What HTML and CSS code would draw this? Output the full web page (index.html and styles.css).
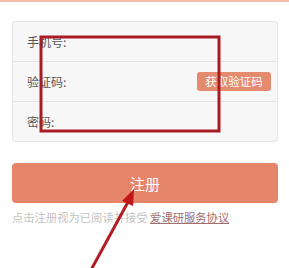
FILE: index.html
```html
<!DOCTYPE html>
<html lang="zh">
<head>
<meta charset="utf-8">
<link rel="stylesheet" href="styles.css">
</head>
<body>
<div class="topline"></div>
<div class="page">
  <div class="card">
    <div class="row"><span class="label">手机号:</span></div>
    <div class="row"><span class="label">验证码:</span><button class="code-btn">获取验证码</button></div>
    <div class="row"><span class="label">密码:</span></div>
  </div>
  <button class="submit">注册</button>
  <p class="terms">点击注册视为已阅读并接受 <a class="link">爱课研服务协议</a></p>
</div>
<svg class="annot" width="289" height="268" viewBox="0 0 289 268">
  <rect x="41" y="37" width="178" height="94" fill="none" stroke="#a81d22" stroke-width="3"/>
  <line x1="91" y1="270" x2="128" y2="202" stroke="#b01e24" stroke-width="3"/>
  <polygon points="134,189 122,201 133,206" fill="#c0161c"/>
</svg>
</body>
</html>
```
FILE: styles.css
```css
* { box-sizing: border-box; }
html, body { margin: 0; padding: 0; background: #fff; }
body {
  width: 289px;
  height: 268px;
  overflow: hidden;
  position: relative;
  font-family: "Noto Sans CJK SC", "Noto Sans", sans-serif;
}
.topline { height: 2px; background: #f2bfaa; }
.page { padding: 0 11px 0 12px; }
.card {
  margin-top: 19px;
  background: #f8f7f8;
  border: 1px solid #e9e8e9;
  border-radius: 3px;
}
.row {
  height: 40px;
  display: flex;
  align-items: center;
  justify-content: space-between;
  padding: 0 6px 0 14px;
  border-top: 1px solid #e6e5e6;
}
.row:first-child { border-top: none; height: 39px; }
.label { font-size: 12px; color: #555; }
.code-btn {
  width: 74px;
  height: 19px;
  border: none;
  border-radius: 3px;
  background: #e48a6f;
  color: #fff;
  font-family: inherit;
  font-size: 11.5px;
  padding: 0;
  line-height: 19px;
}
.submit {
  display: block;
  width: 100%;
  height: 40px;
  margin-top: 21px;
  border: none;
  border-radius: 4px;
  background: #e5856a;
  color: #fff;
  font-family: inherit;
  font-size: 15px;
  padding: 0;
}
.terms {
  margin: 6px 0 0;
  font-size: 11.3px;
  color: #c3c3c3;
  line-height: 16px;
  white-space: nowrap;
}
.link { color: #a06f6f; text-decoration: underline; }
.annot { position: absolute; left: 0; top: 0; }
```
